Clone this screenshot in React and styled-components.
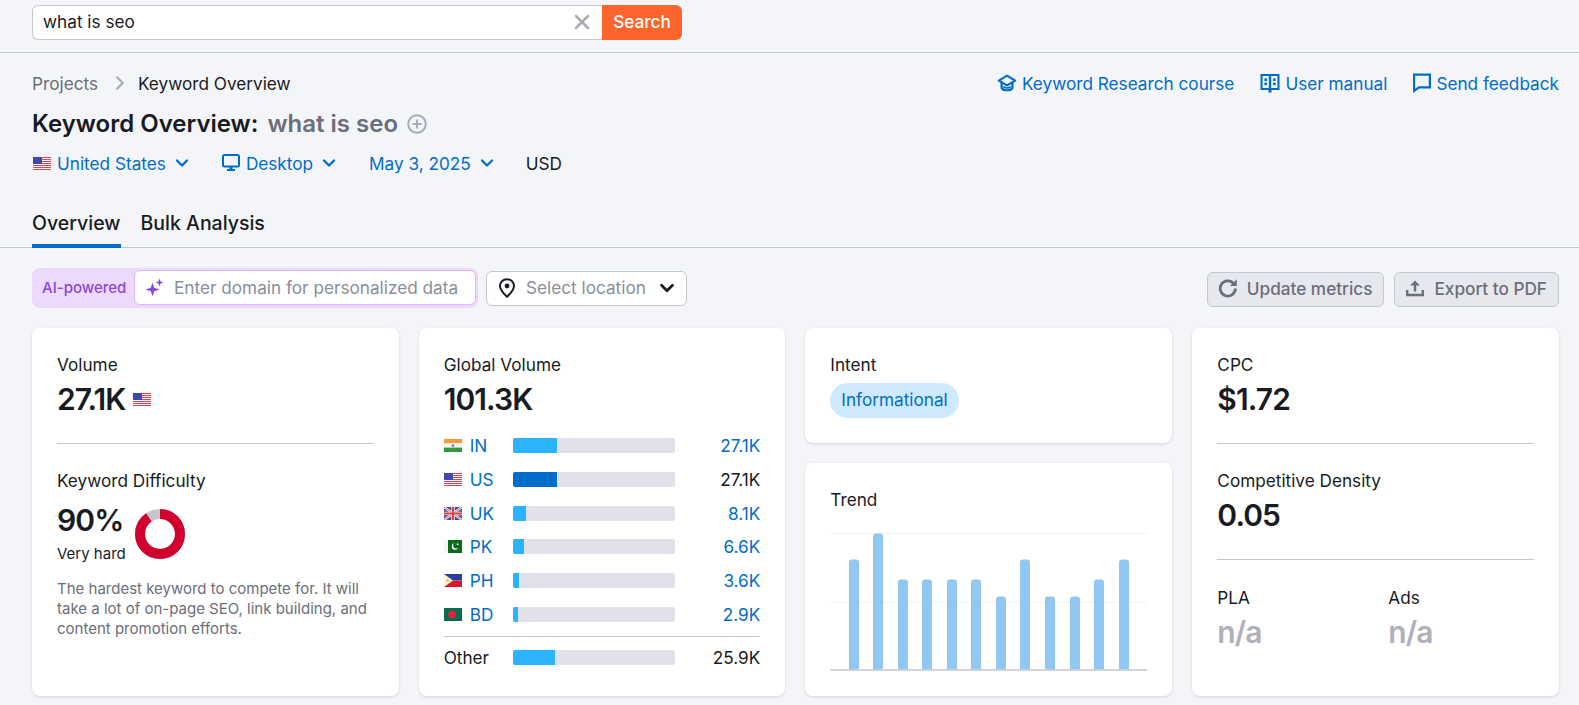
import styled, { createGlobalStyle } from "styled-components";
import { ChevronDown, ChevronRight, X } from "lucide-react";

const GlobalStyle = createGlobalStyle`
  html, body {
    margin: 0;
    padding: 0;
    background: #f4f5f9;
    color: #191b23;
    font-family: Inter, "Noto Sans", sans-serif;
    font-size: 17.2px;
  }
  * { box-sizing: border-box; }
`;

const Page = styled.div`
  width: 100%;
  height: 705px;
  overflow: hidden;
`;
const SearchBar = styled.div`
  height: 53px;
  padding: 5px 0 0 32px;
  border-bottom: 1px solid #c4c7cf;
`;
const SearchForm = styled.div`
  width: 650px;
  height: 35px;
  display: flex;
`;
const SearchInput = styled.div`
  flex: 1;
  display: flex;
  align-items: center;
  justify-content: space-between;
  padding: 0 8px 2px 10px;
  background: #fff;
  border: 1px solid #c4c7cf;
  border-right: 0;
  border-radius: 6px 0 0 6px;
`;
const SearchButton = styled.div`
  width: 80px;
  display: flex;
  align-items: center;
  justify-content: center;
  padding-bottom: 2px;
  background: #ff642d;
  color: #fff;
  font-weight: 500;
  border-radius: 0 6px 6px 0;
`;
const Head = styled.div`
  padding: 0 20px 0 32px;
  border-bottom: 1px solid #c4c7cf;
`;
const TopRow = styled.div`
  display: flex;
  justify-content: space-between;
  align-items: center;
  height: 22px;
  margin-top: 19px;
`;
const Crumbs = styled.div`
  display: flex;
  align-items: center;
  color: #6c6e79;
  svg { margin: 0 7px 0 11px; color: #a9abb6; }
  b { font-weight: 400; color: #191b23; }
`;
const Links = styled.div`
  display: flex;
  gap: 26px;
`;
const BlueLink = styled.span`
  display: inline-flex;
  align-items: center;
  gap: 5px;
  color: #006dca;
  white-space: nowrap;
`;
const Title = styled.h1`
  display: flex;
  align-items: center;
  margin: 16px 0 0;
  height: 28px;
  font-size: 24px;
  line-height: 28px;
  font-weight: 600;
  span { margin-left: 9px; color: #6c6e79; }
  svg { margin-left: 9px; }
`;
const Filters = styled.div`
  display: flex;
  align-items: center;
  height: 24px;
  margin-top: 13px;
`;
const Filter = styled(BlueLink)`
  gap: 6px;
  margin-right: ${(props) => props.$mr}px;
`;
const FlagSlot = styled.span`
  display: block;
  margin-left: 1px;
`;
const Tabs = styled.div`
  display: flex;
  gap: 20px;
  margin-top: 30px;
  height: 42px;
`;
const Tab = styled.div`
  height: 43px;
  padding-top: 6px;
  font-size: 19.5px;
  line-height: 24px;
  font-weight: 500;
  border-bottom: 4px solid ${(props) => (props.$active ? "#006dca" : "transparent")};
`;
const Toolbar = styled.div`
  display: flex;
  align-items: flex-start;
  height: 40px;
  margin: 20px 20px 0 32px;
`;
const AiBox = styled.div`
  width: 446px;
  height: 40px;
  display: flex;
  align-items: center;
  justify-content: space-between;
  padding: 0 2px 1px 10px;
  background: #ecd9fd;
  border-radius: 8px;
  color: #8649e1;
  font-size: 15px;
  font-weight: 500;
`;
const AiInput = styled.div`
  width: 342px;
  height: 35px;
  display: flex;
  align-items: center;
  gap: 10px;
  padding-left: 10px;
  background: #fff;
  border: 1px solid #dcb8fb;
  border-radius: 6px;
  color: #8a8e9b;
  font-size: 17.2px;
  font-weight: 400;
  white-space: nowrap;
`;
const LocationSelect = styled.div`
  width: 201px;
  height: 35px;
  margin: 3px 0 0 8px;
  display: flex;
  align-items: center;
  padding: 0 8px 2px 11px;
  background: #fff;
  border: 1px solid #c4c7cf;
  border-radius: 6px;
  color: #8a8e9b;
  span { flex: 1; margin-left: 10px; }
`;
const Actions = styled.div`
  margin: 4px 0 0 auto;
  display: flex;
  gap: 10px;
`;
const GrayButton = styled.div`
  height: 35px;
  display: flex;
  align-items: center;
  gap: 9px;
  padding: 0 11px 3px 10px;
  background: #e7e8ee;
  border: 1px solid #c4c7cf;
  border-radius: 6px;
  color: #6c6e79;
  font-weight: 500;
  white-space: nowrap;
`;
const Cards = styled.div`
  display: grid;
  grid-template-columns: repeat(4, 1fr);
  grid-template-rows: 368px;
  gap: 20px;
  margin: 20px 20px 0 32px;
`;
const Column = styled.div`
  display: flex;
  flex-direction: column;
  gap: 20px;
`;
const Card = styled.div`
  flex: ${(props) => props.$flex || "none"};
  background: #fff;
  border-radius: 8px;
  box-shadow: 0 1px 3px rgba(25, 27, 35, 0.14);
  padding: 25px;
`;
const Label = styled.div`
  font-size: 17.2px;
  line-height: 24px;
`;
const Value = styled.div`
  display: flex;
  align-items: center;
  gap: 8px;
  font-size: 30px;
  line-height: 40px;
  font-weight: 600;
  letter-spacing: -0.9px;
  margin-top: 2px;
  color: ${(props) => (props.$muted ? "#aeb0bb" : "#191b23")};
`;
const Rule = styled.div`
  height: 1px;
  background: #c4c7cf;
  margin: 24px 0 25px;
`;
const DifficultyRow = styled.div`
  display: flex;
  align-items: flex-end;
  gap: 9px;
  margin-top: 5px;
  svg { margin-bottom: 4px; }
`;
const VeryHard = styled.div`
  font-size: 15px;
  line-height: 18px;
  margin-top: 5px;
`;
const Hint = styled.p`
  margin: 16px 0 0;
  font-size: 15px;
  line-height: 20px;
  color: #6c6e79;
`;
const Countries = styled.div`
  margin-top: 10px;
`;
const CountryRow = styled.div`
  display: grid;
  grid-template-columns: 69px 162px 1fr;
  align-items: center;
  height: 33.7px;
  color: ${(props) => (props.$plain ? "#191b23" : "#006dca")};
`;
const CountryName = styled.div`
  display: flex;
  align-items: center;
  gap: 8px;
`;
const Track = styled.div`
  height: 15px;
  background: #e0e1e9;
  border-radius: 2px;
  overflow: hidden;
`;
const Fill = styled.div`
  height: 100%;
  width: ${(props) => props.$w}px;
  background: ${(props) => (props.$dark ? "#006dca" : "#2bb3ff")};
`;
const Amount = styled.div`
  text-align: right;
  color: ${(props) => (props.$plain ? "#191b23" : "#006dca")};
`;
const CountrySplit = styled.div`
  height: 1px;
  background: #c4c7cf;
  margin: 5px 0 4px;
`;
const IntentPill = styled.div`
  display: inline-block;
  margin-top: 6px;
  height: 35px;
  padding: 0 11px;
  line-height: 34px;
  border-radius: 18px;
  background: #cfe9fe;
  color: #006dca;
`;
const TrendChart = styled.svg`
  display: block;
  margin-top: 21px;
`;
const PlaRow = styled.div`
  display: grid;
  grid-template-columns: 171px 1fr;
  padding-top: 1px;
`;

const FlagBox = styled.svg`
  flex: none;
  display: block;
`;

const UsFlag = () => (
  <FlagBox width="18" height="13" viewBox="0 0 18 13">
    <rect width="18" height="13" fill="#fff" />
    {[0, 2, 4, 6, 8, 10, 12].map((y) => (
      <rect key={y} y={y} width="18" height="1" fill="#ee3d45" />
    ))}
    <rect width="9" height="7" fill="#3f48a8" />
  </FlagBox>
);
const InFlag = () => (
  <FlagBox width="18" height="13" viewBox="0 0 18 13">
    <rect width="18" height="4.4" fill="#f79a3a" />
    <rect y="4.4" width="18" height="4.2" fill="#f4f4f4" />
    <rect y="8.6" width="18" height="4.4" fill="#2f9a3b" />
    <circle cx="9" cy="6.5" r="1.5" fill="#8a8fc0" />
  </FlagBox>
);
const UkFlag = () => (
  <FlagBox width="18" height="13" viewBox="0 0 18 13">
    <rect width="18" height="13" fill="#3f4c9c" />
    <path d="M0 0L18 13M18 0L0 13" stroke="#f4e4e4" strokeWidth="2.4" />
    <path d="M0 0L18 13M18 0L0 13" stroke="#d8505a" strokeWidth="0.8" />
    <path d="M9 0V13M0 6.5H18" stroke="#f4e4e4" strokeWidth="3.6" />
    <path d="M9 0V13M0 6.5H18" stroke="#d8404a" strokeWidth="2" />
  </FlagBox>
);
const PkFlag = () => (
  <FlagBox width="18" height="13" viewBox="0 0 18 13">
    <rect width="18" height="13" fill="#0b6b1d" />
    <rect width="4" height="13" fill="#f6f6f6" />
    <circle cx="11" cy="6.5" r="3.2" fill="#fff" />
    <circle cx="12.2" cy="5.6" r="3" fill="#0b6b1d" />
    <circle cx="13.6" cy="4.2" r="0.9" fill="#fff" />
  </FlagBox>
);
const PhFlag = () => (
  <FlagBox width="18" height="13" viewBox="0 0 18 13">
    <rect width="18" height="6.5" fill="#2b3f9e" />
    <rect y="6.5" width="18" height="6.5" fill="#d9182e" />
    <path d="M0 0L9 6.5L0 13Z" fill="#f7f3ea" />
    <circle cx="3.4" cy="6.5" r="1.6" fill="#f6c93c" />
  </FlagBox>
);
const BdFlag = () => (
  <FlagBox width="18" height="13" viewBox="0 0 18 13">
    <rect width="18" height="13" fill="#0b6b4f" />
    <circle cx="8" cy="6.5" r="3.8" fill="#e8203a" />
  </FlagBox>
);

const CapIcon = () => (
  <svg width="20" height="20" viewBox="0 0 20 20" fill="none" stroke="#006dca" strokeWidth="2.2">
    <path d="M10 2.6L18.2 7.6L10 12.4L1.8 7.6Z" strokeLinejoin="round" />
    <path d="M4.6 10V15C6 18 14 18 15.4 15V10" />
    <path d="M6.4 13.6C8 15.4 12 15.4 13.6 13.6" strokeWidth="1.6" />
  </svg>
);
const BookIcon = () => (
  <svg width="20" height="20" viewBox="0 0 20 20" fill="none">
    <path d="M0.5 1H19.5V17H11.5V19.5H8.5V17H0.5Z" fill="#006dca" />
    <rect x="2.6" y="3" width="6.2" height="12" fill="#f4f5f9" />
    <rect x="11.2" y="3" width="6.2" height="12" fill="#f4f5f9" />
    <rect x="4.4" y="5.4" width="2.6" height="2.6" fill="#006dca" />
    <rect x="4.4" y="9.6" width="2.6" height="2.6" fill="#006dca" />
    <rect x="13" y="5.4" width="2.6" height="2.6" fill="#006dca" />
    <rect x="13" y="9.6" width="2.6" height="2.6" fill="#006dca" />
  </svg>
);
const FeedbackIcon = () => (
  <svg width="18" height="20" viewBox="0 0 18 20" fill="none" stroke="#006dca" strokeWidth="2.2">
    <path d="M1.1 1.6H16.9V14.4H6L1.1 17.9Z" />
  </svg>
);
const PlusCircle = () => (
  <svg width="20" height="20" viewBox="0 0 20 20" fill="none" stroke="#a9abb6" strokeWidth="2">
    <circle cx="10" cy="10" r="8.8" />
    <path d="M10 5.5V14.5M5.5 10H14.5" />
  </svg>
);
const MonitorIcon = () => (
  <svg width="18" height="18" viewBox="0 0 18 18" fill="none">
    <rect x="1" y="1" width="16" height="11.5" rx="1.5" stroke="#006dca" strokeWidth="2" />
    <path d="M7.5 13H10.5V15H13V17H5V15H7.5Z" fill="#006dca" />
  </svg>
);
const SparkIcon = () => (
  <svg width="19" height="19" viewBox="0 0 19 19" fill="#8649e1">
    <path d="M7.5 4.5L9.2 9.8L14.5 11.5L9.2 13.2L7.5 18.5L5.8 13.2L0.5 11.5L5.8 9.8Z" />
    <path d="M14.5 0.5L15.5 3.5L18.5 4.5L15.5 5.5L14.5 8.5L13.5 5.5L10.5 4.5L13.5 3.5Z" />
  </svg>
);
const PinIcon = () => (
  <svg width="18" height="20" viewBox="0 0 18 20" fill="none">
    <path d="M9 1.2C4.8 1.2 2 4.2 2 8C2 12.2 6 16 9 18.8C12 16 16 12.2 16 8C16 4.2 13.2 1.2 9 1.2Z" stroke="#191b23" strokeWidth="2" />
    <circle cx="9" cy="8" r="2.4" fill="#191b23" />
  </svg>
);
const RefreshIcon = () => (
  <svg width="20" height="20" viewBox="0 0 20 20" fill="none">
    <path d="M15.6 5.6A7.6 7.6 0 1 0 17.4 10.6" stroke="#6c6e79" strokeWidth="2.8" />
    <path d="M18.8 1.2V8H12Z" fill="#6c6e79" />
  </svg>
);
const UploadIcon = () => (
  <svg width="20" height="20" viewBox="0 0 20 20" fill="none">
    <path d="M10 2.4L15 7.6H11.2V13.4H8.8V7.6H5Z" fill="#6c6e79" />
    <path d="M2.2 12V17H17.8V12" stroke="#6c6e79" strokeWidth="2.4" />
  </svg>
);

const Donut = () => (
  <svg width="50" height="50" viewBox="0 0 50 50" fill="none">
    <circle cx="25" cy="25" r="20" stroke="#c4c7cf" strokeWidth="10" />
    <circle
      cx="25"
      cy="25"
      r="20"
      stroke="#d1002f"
      strokeWidth="10"
      strokeDasharray="113.1 125.7"
      transform="rotate(-90 25 25)"
    />
  </svg>
);

const countries = [
  { name: "IN", Flag: InFlag, w: 44, value: "27.1K" },
  { name: "US", Flag: UsFlag, w: 44, value: "27.1K", dark: true },
  { name: "UK", Flag: UkFlag, w: 13, value: "8.1K" },
  { name: "PK", Flag: PkFlag, w: 11, value: "6.6K" },
  { name: "PH", Flag: PhFlag, w: 6, value: "3.6K" },
  { name: "BD", Flag: BdFlag, w: 5, value: "2.9K" },
];

const trend = [110, 136, 90, 90, 90, 90, 73, 110, 73, 73, 90, 110];
const trendX = [19, 43, 68, 92, 117, 141, 166, 190, 215, 240, 264, 289];

const Trend = () => (
  <TrendChart width="317" height="138" viewBox="0 0 317 138">
    <path d="M0 .5H317M0 69H317" stroke="#f0f1f4" />
    {trend.map((h, i) => (
      <path
        key={i}
        d={`M${trendX[i]} 136.5V${139.5 - h}q0-3 3-3h4q3 0 3 3V136.5Z`}
        fill="#91c7f0"
      />
    ))}
    <path d="M0 137H317" stroke="#c4c7cf" strokeWidth="1.5" />
  </TrendChart>
);

const Chevron = () => <ChevronDown size={20} strokeWidth={2.8} />;

export default function App() {
  return (
    <Page>
      <GlobalStyle />
      <SearchBar>
        <SearchForm>
          <SearchInput>
            what is seo
            <X size={24} strokeWidth={2.5} color="#a9abb6" />
          </SearchInput>
          <SearchButton>Search</SearchButton>
        </SearchForm>
      </SearchBar>
      <Head>
        <TopRow>
          <Crumbs>
            Projects
            <ChevronRight size={22} strokeWidth={2.5} />
            <b>Keyword Overview</b>
          </Crumbs>
          <Links>
            <BlueLink>
              <CapIcon />
              Keyword Research course
            </BlueLink>
            <BlueLink>
              <BookIcon />
              User manual
            </BlueLink>
            <BlueLink>
              <FeedbackIcon />
              Send feedback
            </BlueLink>
          </Links>
        </TopRow>
        <Title>
          Keyword Overview:
          <span>what is seo</span>
          <PlusCircle />
        </Title>
        <Filters>
          <Filter $mr={30}>
            <FlagSlot>
              <UsFlag />
            </FlagSlot>
            United States
            <Chevron />
          </Filter>
          <Filter $mr={30}>
            <MonitorIcon />
            Desktop
            <Chevron />
          </Filter>
          <Filter $mr={29}>
            May 3, 2025
            <Chevron />
          </Filter>
          USD
        </Filters>
        <Tabs>
          <Tab $active>Overview</Tab>
          <Tab>Bulk Analysis</Tab>
        </Tabs>
      </Head>
      <Toolbar>
        <AiBox>
          AI-powered
          <AiInput>
            <SparkIcon />
            Enter domain for personalized data
          </AiInput>
        </AiBox>
        <LocationSelect>
          <PinIcon />
          <span>Select location</span>
          <ChevronDown size={22} strokeWidth={3} color="#191b23" />
        </LocationSelect>
        <Actions>
          <GrayButton>
            <RefreshIcon />
            Update metrics
          </GrayButton>
          <GrayButton>
            <UploadIcon />
            Export to PDF
          </GrayButton>
        </Actions>
      </Toolbar>
      <Cards>
        <Card>
          <Label>Volume</Label>
          <Value>
            27.1K
            <UsFlag />
          </Value>
          <Rule />
          <Label>Keyword Difficulty</Label>
          <DifficultyRow>
            <div>
              <Value>90%</Value>
              <VeryHard>Very hard</VeryHard>
            </div>
            <Donut />
          </DifficultyRow>
          <Hint>
            The hardest keyword to compete for. It will take a lot of on-page SEO, link building,
            and content promotion efforts.
          </Hint>
        </Card>
        <Card>
          <Label>Global Volume</Label>
          <Value>101.3K</Value>
          <Countries>
            {countries.map(({ name, Flag, w, value, dark }) => (
              <CountryRow key={name}>
                <CountryName>
                  <Flag />
                  {name}
                </CountryName>
                <Track>
                  <Fill $w={w} $dark={dark} />
                </Track>
                <Amount $plain={dark}>{value}</Amount>
              </CountryRow>
            ))}
            <CountrySplit />
            <CountryRow $plain>
              <CountryName>Other</CountryName>
              <Track>
                <Fill $w={42} />
              </Track>
              <Amount $plain>25.9K</Amount>
            </CountryRow>
          </Countries>
        </Card>
        <Column>
          <Card>
            <Label>Intent</Label>
            <IntentPill>Informational</IntentPill>
          </Card>
          <Card $flex="1">
            <Label>Trend</Label>
            <Trend />
          </Card>
        </Column>
        <Card>
          <Label>CPC</Label>
          <Value>$1.72</Value>
          <Rule />
          <Label>Competitive Density</Label>
          <Value>0.05</Value>
          <Rule />
          <PlaRow>
            <div>
              <Label>PLA</Label>
              <Value $muted>n/a</Value>
            </div>
            <div>
              <Label>Ads</Label>
              <Value $muted>n/a</Value>
            </div>
          </PlaRow>
        </Card>
      </Cards>
    </Page>
  );
}
